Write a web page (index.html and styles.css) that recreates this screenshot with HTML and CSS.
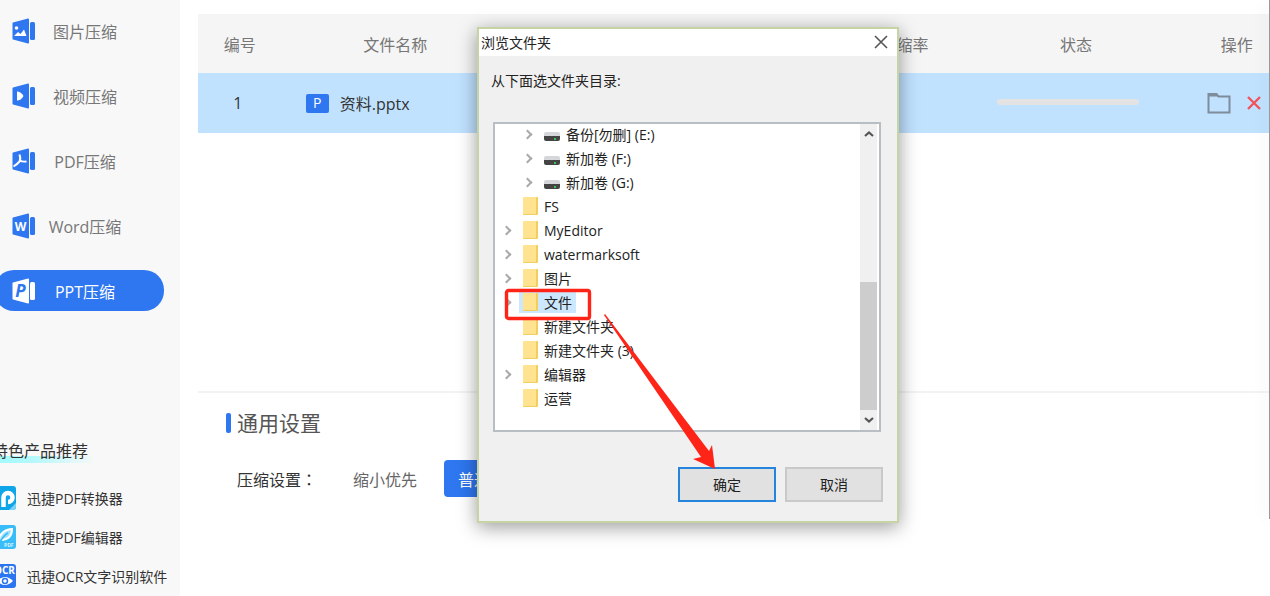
FILE: index.html
```html
<!DOCTYPE html>
<html lang="zh-CN">
<head>
    <meta charset="UTF-8">
    <meta name="viewport" content="width=device-width, initial-scale=1.0">
    <title>PPT压缩</title>
    <link rel="stylesheet" href="styles.css">
</head>
<body>
    <!-- 侧边栏 -->
    <aside class="sidebar">
        <nav class="menu">
            <a href="#" class="menu-item">
                <svg class="menu-icon" viewBox="0 0 24 26" aria-hidden="true">
                    <path class="shape" d="M1 4.500 16 .5Q17 .3 17 1.500V24.500Q17 25.700 16 25.500L1 21.500Q.5 21.300.5 20.500V5.500Q.5 4.700 1 4.500Z"/>
                    <rect class="shape" x="18" y="4" width="5" height="18" rx="1.500"/>
                    <circle class="cut" cx="4.500" cy="10" r="1.800"/>
                    <path class="cut" d="M2 18 6 14l2.500 2 3.500-4.500 2.500 6.500Z"/>
                </svg>
                <span class="menu-label">图片压缩</span>
            </a>
            <a href="#" class="menu-item">
                <svg class="menu-icon" viewBox="0 0 24 26" aria-hidden="true">
                    <path class="shape" d="M1 4.500 16 .5Q17 .3 17 1.500V24.500Q17 25.700 16 25.500L1 21.500Q.5 21.300.5 20.500V5.500Q.5 4.700 1 4.500Z"/>
                    <rect class="shape" x="18" y="4" width="5" height="18" rx="1.500"/>
                    <path class="cut" d="M5 8.500Q9 8.500 11.500 13 9 17.500 5 17.500Z"/>
                </svg>
                <span class="menu-label">视频压缩</span>
            </a>
            <a href="#" class="menu-item">
                <svg class="menu-icon" viewBox="0 0 24 26" aria-hidden="true">
                    <path class="shape" d="M1 4.500 16 .5Q17 .3 17 1.500V24.500Q17 25.700 16 25.500L1 21.500Q.5 21.300.5 20.500V5.500Q.5 4.700 1 4.500Z"/>
                    <rect class="shape" x="18" y="4" width="5" height="18" rx="1.500"/>
                    <path class="cut-line" d="M7.500 6.500Q9 11 7.500 13.500 5 16.500 1.500 18.500M8 12.500Q10 14 14.500 13.500"/>
                </svg>
                <span class="menu-label">PDF压缩</span>
            </a>
            <a href="#" class="menu-item">
                <svg class="menu-icon" viewBox="0 0 24 26" aria-hidden="true">
                    <path class="shape" d="M1 4.500 16 .5Q17 .3 17 1.500V24.500Q17 25.700 16 25.500L1 21.500Q.5 21.300.5 20.500V5.500Q.5 4.700 1 4.500Z"/>
                    <rect class="shape" x="18" y="4" width="5" height="18" rx="1.500"/>
                    <text class="cut letter" x="8.500" y="18" font-size="12">W</text>
                </svg>
                <span class="menu-label">Word压缩</span>
            </a>
            <a href="#" class="menu-item active">
                <svg class="menu-icon" viewBox="0 0 24 26" aria-hidden="true">
                    <path class="shape" d="M1 4.500 16 .5Q17 .3 17 1.500V24.500Q17 25.700 16 25.500L1 21.500Q.5 21.300.5 20.500V5.500Q.5 4.700 1 4.500Z"/>
                    <rect class="shape" x="18" y="4" width="5" height="18" rx="1.500"/>
                    <text class="cut letter slanted" x="8.500" y="19" font-size="17">P</text>
                </svg>
                <span class="menu-label">PPT压缩</span>
            </a>
        </nav>

        <section class="products">
            <h2>特色产品推荐</h2>
            <a href="#" class="product">
                <svg class="product-icon" viewBox="0 0 24 24" aria-hidden="true">
                    <rect width="24" height="24" rx="3" fill="#0ea5e9"/>
                    <path d="M11.500 21V11.500a4.500 4.500 0 1 1 4.500 4.500" fill="none" stroke="#fff" stroke-width="4.500"/>
                    <path d="M17 24 24 17v4a3 3 0 0 1-3 3Z" fill="#7dd3f5"/>
                </svg>
                迅捷PDF转换器
            </a>
            <a href="#" class="product">
                <svg class="product-icon" viewBox="0 0 24 24" aria-hidden="true">
                    <rect width="24" height="24" rx="3" fill="#38bdf8"/>
                    <path d="M6 19Q7 5 20 4 20 14 10 15" fill="#9fe0fb" stroke="#fff" stroke-width="2"/>
                    <path d="M8 17Q12 10 16 8" fill="none" stroke="#38bdf8" stroke-width="1.500"/>
                    <text x="12" y="22" font-size="5" font-weight="700" fill="#d9f3fe">PDF</text>
                </svg>
                迅捷PDF编辑器
            </a>
            <a href="#" class="product">
                <svg class="product-icon" viewBox="0 0 24 24" aria-hidden="true">
                    <rect width="24" height="24" rx="3" fill="#2b76f0"/>
                    <text x="2" y="10" font-size="10" font-weight="700" fill="#fff">OCR</text>
                    <path d="M5 17Q13 9 21 17 13 25 5 17Z" fill="#fff"/>
                    <circle cx="13" cy="17" r="2.500" fill="none" stroke="#2b76f0" stroke-width="1.500"/>
                </svg>
                迅捷OCR文字识别软件
            </a>
        </section>
    </aside>

    <!-- 主区域 -->
    <main class="main-content">
        <section class="files">
            <table class="file-table">
                <colgroup>
                    <col class="col-no">
                    <col class="col-name">
                    <col class="col-size">
                    <col class="col-rate">
                    <col class="col-status">
                    <col class="col-action">
                </colgroup>
                <thead>
                    <tr>
                        <th>编号</th>
                        <th>文件名称</th>
                        <th></th>
                        <th>压缩率</th>
                        <th>状态</th>
                        <th>操作</th>
                    </tr>
                </thead>
                <tbody>
                    <tr>
                        <td class="number">1</td>
                        <td>
                            <div class="file-name">
                                <span class="file-badge">P</span>
                                资料.pptx
                            </div>
                        </td>
                        <td></td>
                        <td></td>
                        <td class="status"><progress class="progress" value="0" max="100" aria-label="状态"></progress></td>
                        <td>
                            <div class="actions">
                                <button type="button" class="icon-btn" aria-label="打开文件夹">
                                    <svg width="24" height="22" viewBox="0 0 24 22">
                                        <path d="M1.500 2h8l2 2.500h11V20.500h-21Z" fill="none" stroke="#7f8c99" stroke-width="2"/>
                                        <path d="M1 1.500h9l2 3H1Z" fill="#7f8c99"/>
                                    </svg>
                                </button>
                                <button type="button" class="icon-btn" aria-label="删除">
                                    <svg width="14" height="14" viewBox="0 0 14 14">
                                        <path d="M1 1 13 13M13 1 1 13" stroke="#f2545b" stroke-width="2.400"/>
                                    </svg>
                                </button>
                            </div>
                        </td>
                    </tr>
                </tbody>
            </table>
        </section>

        <section class="settings">
            <h2>通用设置</h2>
            <div class="setting-row">
                <span class="setting-label" lang="zh-Hant">压缩设置：</span>
                <button type="button" class="option">缩小优先</button>
                <button type="button" class="option selected">普通压缩</button>
            </div>
        </section>
    </main>

    <!-- 浏览文件夹窗口 -->
    <div class="dialog" role="dialog" aria-labelledby="dialog-title">
        <header class="dialog-header">
            <h1 id="dialog-title">浏览文件夹</h1>
            <button type="button" class="icon-btn" aria-label="关闭">
                <svg width="14" height="14" viewBox="0 0 14 14">
                    <path d="M1 1 13 13M13 1 1 13" stroke="#555" stroke-width="1.600"/>
                </svg>
            </button>
        </header>
        <div class="dialog-body">
            <p>从下面选文件夹目录:</p>
            <div class="tree">
                <ul class="tree-list">
                    <li class="nested expandable"><button type="button" class="node"><i class="drive"></i>备份[勿删] (E:)</button></li>
                    <li class="nested expandable"><button type="button" class="node"><i class="drive"></i>新加卷 (F:)</button></li>
                    <li class="nested expandable"><button type="button" class="node"><i class="drive"></i>新加卷 (G:)</button></li>
                    <li><button type="button" class="node"><i class="folder"></i>FS</button></li>
                    <li class="expandable"><button type="button" class="node"><i class="folder"></i>MyEditor</button></li>
                    <li class="expandable"><button type="button" class="node"><i class="folder"></i>watermarksoft</button></li>
                    <li class="expandable"><button type="button" class="node"><i class="folder"></i>图片</button></li>
                    <li class="expandable"><button type="button" class="node selected"><i class="folder"></i>文件</button></li>
                    <li><button type="button" class="node"><i class="folder"></i>新建文件夹</button></li>
                    <li><button type="button" class="node"><i class="folder"></i>新建文件夹 (3)</button></li>
                    <li class="expandable"><button type="button" class="node"><i class="folder"></i>编辑器</button></li>
                    <li><button type="button" class="node"><i class="folder"></i>运营</button></li>
                </ul>
                <div class="scrollbar">
                    <svg width="10" height="6" viewBox="0 0 10 6"><path d="M1 5 5 1.500 9 5" fill="none" stroke="#555" stroke-width="2.200"/></svg>
                    <div class="scroll-track"><div class="scroll-thumb"></div></div>
                    <svg width="10" height="6" viewBox="0 0 10 6"><path d="M1 1 5 4.500 9 1" fill="none" stroke="#555" stroke-width="2.200"/></svg>
                </div>
            </div>
            <div class="dialog-buttons">
                <button type="button" class="btn primary">确定</button>
                <button type="button" class="btn">取消</button>
            </div>
        </div>
        <!-- 红框和箭头标注 -->
        <svg class="annotation" width="212" height="182" viewBox="0 0 212 182" aria-hidden="true">
            <rect x="2.500" y="2.500" width="83" height="28" rx="2" fill="none" stroke="#fe2418" stroke-width="3.400"/>
            <path d="M101 26 205 163 208 157 211 181 189 171 197 169 100 27Z" fill="#fe2418"/>
        </svg>
    </div>
</body>
</html>
```
FILE: styles.css
```css
* {
    margin: 0;
    padding: 0;
    box-sizing: border-box;
}

body {
    font-family: "Open Sans", "Noto Sans CJK SC", sans-serif;
    font-size: 16px;
    color: #333;
    background-color: #fff;
    display: flex;
    min-height: 100vh;
    position: relative;
    overflow: hidden;
}

button {
    font: inherit;
    color: inherit;
    border: none;
    background: none;
    cursor: pointer;
}

a {
    color: inherit;
    text-decoration: none;
}

/* 侧边栏 */
.sidebar {
    width: 180px;
    flex-shrink: 0;
    background-color: #f8f8f8;
    overflow: hidden;
}

.menu {
    display: flex;
    flex-direction: column;
    gap: 24px;
    padding-top: 10px;
    margin: 0 16px 0 -6px;
}

.menu-item {
    display: flex;
    align-items: center;
    gap: 11px;
    height: 41px;
    padding-left: 18px;
    border-radius: 20px;
    color: #777;
}

.menu-item.active {
    background-color: #2e77f0;
    color: #fff;
}

.menu-icon {
    width: 24px;
    height: 26px;
    flex-shrink: 0;
}

.menu-label {
    width: 76px;
    text-align: center;
    white-space: nowrap;
}

.shape {
    fill: #2e77f0;
}

.cut {
    fill: #fff;
}

.cut-line {
    fill: none;
    stroke: #fff;
    stroke-width: 2;
}

.active .shape {
    fill: #fff;
}

.active .cut {
    fill: #2e77f0;
}

.letter {
    font-weight: 700;
    text-anchor: middle;
}

.slanted {
    font-style: italic;
}

.products {
    display: flex;
    flex-direction: column;
    gap: 15px;
    margin: 128px 0 0 -8px;
    font-size: 14px;
}

.products h2 {
    width: 104px;
    margin-bottom: 8px;
    font-size: 16px;
    font-weight: 400;
    line-height: 24px;
    background: linear-gradient(to right, #9ffbff, #b5f8fb 40%, #f8f8f8) bottom / 100% 7px no-repeat;
}

.product {
    display: flex;
    align-items: center;
    gap: 11px;
    height: 24px;
    white-space: nowrap;
}

.product-icon {
    width: 24px;
    height: 24px;
}

/* 主区域 */
.main-content {
    flex: 1;
    display: flex;
    flex-direction: column;
    padding: 14px 0 0 18px;
}

/* 窗口右边缘 */
.main-content::after {
    content: "";
    position: absolute;
    top: 0;
    right: 0;
    width: 1px;
    height: 87%;
    background-color: #999;
    box-shadow: 0 0 16px rgba(0, 0, 0, 0.3);
}

.files {
    flex: 1;
}

.file-table {
    width: 100%;
    table-layout: fixed;
    border-collapse: collapse;
}

.col-no { width: 8%; }
.col-name { width: 21%; }
.col-size { width: 33%; }
.col-rate { width: 8%; }
.col-status { width: 24%; }
.col-action { width: 6%; }

.file-table th {
    height: 59px;
    padding-right: 2px;
    background-color: #f5f5f5;
    color: #777;
    font-weight: 400;
    white-space: nowrap;
}

.file-table td {
    height: 60px;
    background-color: #c0e2ff;
}

.file-table .number {
    padding-right: 6px;
    text-align: center;
}

.file-name {
    display: flex;
    align-items: center;
    gap: 11px;
    padding-left: 22px;
}

.file-badge {
    width: 23px;
    height: 19px;
    border-radius: 2px;
    background-color: #2e77f0;
    color: #fff;
    font-size: 14px;
    line-height: 18px;
    text-align: center;
}

.file-table .status {
    padding: 0 18px 6px 0;
    text-align: center;
    line-height: 0;
}

.progress {
    appearance: none;
    width: 142px;
    height: 6px;
    border: none;
    border-radius: 3px;
    background-color: #e3e3e3;
    overflow: hidden;
}

.progress::-webkit-progress-bar {
    background-color: #e3e3e3;
}

.actions {
    display: flex;
    align-items: center;
    justify-content: center;
    gap: 16px;
    padding-right: 7px;
}

.icon-btn {
    display: flex;
}

.settings {
    height: 205px;
    padding: 16px 28px;
    border-top: 2px solid #f3f3f3;
}

.settings h2 {
    display: flex;
    align-items: center;
    gap: 6px;
    font-size: 21px;
    font-weight: 400;
    line-height: 28px;
    color: #555;
}

.settings h2::before {
    content: "";
    width: 5px;
    height: 20px;
    border-radius: 2px;
    background-color: #2e77f0;
}

.setting-row {
    display: flex;
    align-items: center;
    margin-top: 23px;
    padding-left: 11px;
}

.setting-label {
    margin-right: 9px;
    font-family: "Open Sans", "Noto Sans CJK TC", sans-serif;
}

.option {
    height: 37px;
    padding: 0 14px;
    margin-left: 13px;
    border-radius: 4px;
    color: #666;
}

.option.selected {
    background-color: #2e77f0;
    color: #fff;
}

/* 浏览文件夹窗口 */
.dialog {
    position: absolute;
    top: 27px;
    left: 477px;
    width: 422px;
    border: 2px solid #c6d3a5;
    background-color: #f0f0f0;
    box-shadow: 0 4px 18px rgba(0, 0, 0, 0.4);
    font-size: 14px;
    color: #222;
}

.dialog-header {
    display: flex;
    align-items: center;
    justify-content: space-between;
    height: 27px;
    padding: 0 9px 2px 2px;
    background-color: #fff;
}

.dialog-header h1 {
    font-size: 14px;
    font-weight: 400;
}

.dialog-body {
    padding: 15px 14px 19px 12px;
}

.dialog-body p {
    line-height: 20px;
}

.tree {
    display: flex;
    height: 310px;
    margin: 31px 2px 0;
    border: 2px solid #b9bdc4;
    background-color: #fff;
    overflow: hidden;
}

.tree-list {
    flex: 1;
    margin-top: -2px;
    list-style: none;
}

.tree-list li {
    display: flex;
    align-items: center;
    height: 24px;
    padding-left: 8px;
}

.tree-list .nested {
    padding-left: 29px;
}

/* 展开箭头 */
.tree-list li::before {
    content: "";
    width: 7px;
    height: 7px;
    margin-right: 9px;
}

.tree-list .expandable::before {
    box-sizing: border-box;
    border-top: 2px solid #aaa;
    border-right: 2px solid #aaa;
    transform: rotate(45deg);
}

.node {
    display: flex;
    align-items: center;
    gap: 6px;
    height: 22px;
    padding: 0 4px;
    white-space: nowrap;
}

.node.selected {
    background-color: #cce8ff;
}

.folder {
    width: 15px;
    height: 18px;
    border-right: 2px solid #f3cd5e;
    border-bottom: 1px solid #f3cd5e;
    border-radius: 1px;
    background-color: #ffe391;
}

.drive {
    width: 16px;
    height: 9px;
    margin-top: 5px;
    border-radius: 2px;
    background: linear-gradient(to right, transparent 10px, #3fc24c 10px, #3fc24c 12px, transparent 12px) 0 6px / 100% 2px no-repeat, linear-gradient(#d5d7da 4px, #444 4px);
}

.scrollbar {
    display: flex;
    flex-direction: column;
    align-items: center;
    width: 17px;
    margin-right: 2px;
    padding: 7px 0;
    background-color: #f0f0f0;
}

.scroll-track {
    flex: 1;
    display: flex;
    flex-direction: column;
    justify-content: flex-end;
    width: 100%;
    padding: 7px 0;
}

.scroll-thumb {
    height: 48%;
    background-color: #cdcdcd;
}

.dialog-buttons {
    display: flex;
    justify-content: flex-end;
    gap: 9px;
    margin-top: 35px;
}

.btn {
    width: 98px;
    height: 35px;
    padding-bottom: 2px;
    border: 2px solid #c9c9c9;
    background-color: #e1e1e1;
}

.btn.primary {
    border-color: #2585dc;
}

.annotation {
    position: absolute;
    top: 259px;
    left: 25px;
}
```
